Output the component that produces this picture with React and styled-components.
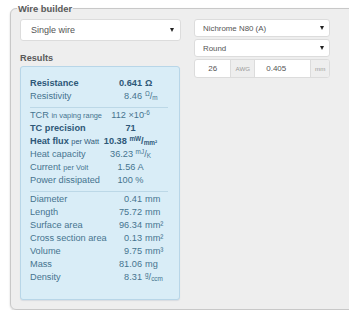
import styled, { createGlobalStyle } from "styled-components";

const GlobalStyle = createGlobalStyle`
  html, body {
    margin: 0;
    background: #fff;
    overflow: hidden;
  }
  body {
    font-family: "Liberation Sans", Arial, sans-serif;
  }
`;

const Panel = styled.fieldset`
  margin: 2px 0 0 10px;
  width: 380px;
  box-sizing: border-box;
  padding: 4px 9px 9px;
  border: 1px solid #c8c8c8;
  border-radius: 6px;
  background: #eeeeee;
  box-shadow: 0 1px 2px rgba(0, 0, 0, 0.18);
`;

const Legend = styled.legend`
  margin-left: -3px;
  padding: 0 1px;
  font-size: 9.4px;
  font-weight: bold;
  line-height: 13px;
  color: #5a5a5a;
`;

const Columns = styled.div`
  display: flex;
  gap: 13px;
  align-items: flex-start;
`;

const LeftCol = styled.div`
  width: 161px;
  display: flex;
  flex-direction: column;
`;

const RightCol = styled.div`
  width: 136px;
  display: flex;
  flex-direction: column;
  gap: 2px;
`;

const Select = styled.div`
  box-sizing: border-box;
  height: ${(p) => (p.$small ? 18 : 22)}px;
  display: flex;
  align-items: center;
  justify-content: space-between;
  padding: ${(p) => (p.$small ? "0 5px 0 8px" : "0 6px 0 10px")};
  background: #fff;
  border: 1px solid #dcdcdc;
  border-radius: 3px;
  font-size: ${(p) => (p.$small ? 7.9 : 9)}px;
  color: #555;
`;

const Caret = styled.span`
  width: 0;
  height: 0;
  border-left: 2.5px solid transparent;
  border-right: 2.5px solid transparent;
  border-top: 4px solid #222;
`;

const InputGroup = styled.div`
  display: flex;
  height: 19px;
  box-sizing: border-box;
  border: 1px solid #dcdcdc;
  border-radius: 3px;
  overflow: hidden;
  background: #fff;
`;

const Field = styled.div`
  width: ${(p) => p.$w}px;
  display: flex;
  align-items: center;
  justify-content: ${(p) => (p.$center ? "center" : "flex-start")};
  padding-left: ${(p) => (p.$center ? 0 : 11)}px;
  font-size: 8px;
  color: #555;
`;

const Addon = styled.div`
  width: ${(p) => p.$w}px;
  display: flex;
  align-items: center;
  justify-content: center;
  background: #eeeeee;
  border-left: 1px solid #dcdcdc;
  border-right: 1px solid #dcdcdc;
  font-size: 6.2px;
  color: #999;
  &:last-child {
    border-right: none;
  }
`;

const ResultsTitle = styled.div`
  margin-top: 11px;
  font-size: 9.2px;
  font-weight: bold;
  line-height: 12px;
  color: #5a5a5a;
`;

const ResultsBox = styled.div`
  margin-top: 2px;
  width: 160px;
  box-sizing: border-box;
  padding: 10px 11px 15px 9px;
  background: #d9edf7;
  border: 1px solid #b8d6e8;
  border-radius: 3px;
  box-shadow: 0 1px 1px rgba(60, 90, 130, 0.12);
  color: #46748f;
  font-size: 9.2px;
  line-height: 13px;
`;

const Row = styled.div`
  display: grid;
  grid-template-columns: ${(p) => (p.$centered ? "70px 61px" : "78px 34px 1fr")};
  white-space: nowrap;
  font-weight: ${(p) => (p.$bold ? "bold" : "normal")};
  color: ${(p) => (p.$bold ? "#2e5878" : "inherit")};
`;

const Num = styled.span`
  text-align: right;
`;

const Unit = styled.span`
  padding-left: 3px;
`;

const Centered = styled.span`
  text-align: center;
`;

const Small = styled.span`
  font-size: 7.4px;
  font-weight: normal;
`;

const Sup = styled.sup`
  font-size: 6.4px;
  line-height: 0;
  vertical-align: 3px;
`;

const Sub = styled.sub`
  font-size: 6.4px;
  line-height: 0;
  vertical-align: -1px;
`;

const Separator = styled.div`
  height: 1px;
  margin: 4px 0 1px;
  background: #bcd8e7;
`;

const Frac = ({ top, bottom }) => (
  <>
    <Sup>{top}</Sup>/<Sub>{bottom}</Sub>
  </>
);

const App = () => {
  return (
    <>
      <GlobalStyle />
      <Panel>
        <Legend>Wire builder</Legend>
        <Columns>
          <LeftCol>
            <Select>
              Single wire
              <Caret />
            </Select>
            <ResultsTitle>Results</ResultsTitle>
            <ResultsBox>
              <Row $bold>
                <span>Resistance</span>
                <Num>0.641</Num>
                <Unit>Ω</Unit>
              </Row>
              <Row>
                <span>Resistivity</span>
                <Num>8.46</Num>
                <Unit>
                  <Frac top="Ω" bottom="m" />
                </Unit>
              </Row>
              <Separator />
              <Row $centered>
                <span>
                  TCR <Small>in vaping range</Small>
                </span>
                <Centered>
                  112 ×10<Sup>-6</Sup>
                </Centered>
              </Row>
              <Row $centered $bold>
                <span>TC precision</span>
                <Centered>71</Centered>
              </Row>
              <Row $centered $bold>
                <span>
                  Heat flux <Small>per Watt</Small>
                </span>
                <Centered>
                  10.38 <Frac top="mW" bottom="mm²" />
                </Centered>
              </Row>
              <Row $centered>
                <span>Heat capacity</span>
                <Centered>
                  36.23 <Frac top="mJ" bottom="K" />
                </Centered>
              </Row>
              <Row $centered>
                <span>
                  Current <Small>per Volt</Small>
                </span>
                <Centered>1.56 A</Centered>
              </Row>
              <Row $centered>
                <span>Power dissipated</span>
                <Centered>100 %</Centered>
              </Row>
              <Separator />
              <Row>
                <span>Diameter</span>
                <Num>0.41</Num>
                <Unit>mm</Unit>
              </Row>
              <Row>
                <span>Length</span>
                <Num>75.72</Num>
                <Unit>mm</Unit>
              </Row>
              <Row>
                <span>Surface area</span>
                <Num>96.34</Num>
                <Unit>mm²</Unit>
              </Row>
              <Row>
                <span>Cross section area</span>
                <Num>0.13</Num>
                <Unit>mm²</Unit>
              </Row>
              <Row>
                <span>Volume</span>
                <Num>9.75</Num>
                <Unit>mm³</Unit>
              </Row>
              <Row>
                <span>Mass</span>
                <Num>81.06</Num>
                <Unit>mg</Unit>
              </Row>
              <Row>
                <span>Density</span>
                <Num>8.31</Num>
                <Unit>
                  <Frac top="g" bottom="ccm" />
                </Unit>
              </Row>
            </ResultsBox>
          </LeftCol>
          <RightCol>
            <Select $small>
              Nichrome N80 (A)
              <Caret />
            </Select>
            <Select $small>
              Round
              <Caret />
            </Select>
            <InputGroup>
              <Field $w={40} $center>
                26
              </Field>
              <Addon $w={26}>AWG</Addon>
              <Field $w={50}>0.405</Field>
              <Addon $w={20}>mm</Addon>
            </InputGroup>
          </RightCol>
        </Columns>
      </Panel>
    </>
  );
};

export default App;
